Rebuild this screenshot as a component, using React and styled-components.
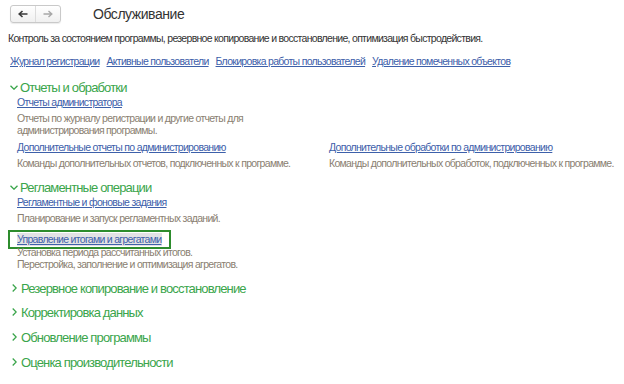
import React from "react";
import styled, { createGlobalStyle } from "styled-components";

const Global = createGlobalStyle`
  html, body { margin: 0; padding: 0; background: #fff; }
  body { font-family: "Liberation Sans", Arial, sans-serif; }
`;

const Page = styled.div`
  width: 624px;
  height: 384px;
  box-sizing: border-box;
  padding: 5px 8px 0 8px;
  display: flex;
  flex-direction: column;
  overflow: hidden;
  color: #333;
`;

const Small = `
  font-family: "Liberation Sans", Arial, sans-serif;
  font-size: 10.5px;
  letter-spacing: -0.7px;
  white-space: nowrap;
`;

const Header = styled.div`
  display: flex;
  align-items: center;
  height: 18px;
  padding-left: 2px;
`;

const NavGroup = styled.div`
  display: flex;
  width: 51px;
  height: 18px;
  box-sizing: border-box;
  border: 1px solid #c9c9c9;
  border-radius: 3px;
  background: linear-gradient(#ffffff, #f0f0f0);
  box-shadow: 0 1px 1px rgba(0,0,0,0.08);
`;

const NavButton = styled.div`
  flex: 1;
  display: flex;
  align-items: center;
  justify-content: center;
  & + & { border-left: 1px solid #dcdcdc; }
`;

const Title = styled.div`
  margin-left: 32px;
  font-size: 14px;
  letter-spacing: -0.45px;
  color: #333;
`;

const Lead = styled.div`
  ${Small}
  margin-top: 9px;
  line-height: 13px;
  color: #333;
`;

const LinkRow = styled.div`
  margin-top: 10px;
  padding-left: 2px;
  display: flex;
  gap: 7px;
`;

const Link = styled.a`
  ${Small}
  line-height: 13px;
  color: #3d60aa;
  text-decoration: underline;
  cursor: pointer;
  align-self: flex-start;
`;

const FocusFrame = styled.div`
  align-self: flex-start;
  margin-left: -9px;
  padding: 1px 7px 1px 7px;
  border: 2px solid #2d8c2d;
  margin-top: 6px;
  margin-bottom: -3px;
  line-height: 13px;
  display: flex;
`;

const SelectedLink = styled(Link)`
  background: #e2e2e4;
  padding-right: 1px;
`;

const SectionHead = styled.div`
  display: flex;
  align-items: center;
  margin-top: ${(p) => p.$mt}px;
  height: 16px;
  font-size: 13px;
  letter-spacing: -0.85px;
  color: #3aa54b;
  padding-left: ${(p) => (p.$open ? 2 : 4)}px;
`;

const Chevron = styled.span`
  display: inline-flex;
  width: ${(p) => (p.$open ? 10 : 9)}px;
`;

const SectionBody = styled.div`
  padding-left: 9px;
  display: flex;
  flex-direction: column;
`;

const Columns = styled.div`
  display: grid;
  grid-template-columns: 312px 1fr;
  margin-top: ${(p) => p.$mt || 0}px;
`;

const Item = styled.div`
  display: flex;
  flex-direction: column;
  margin-top: ${(p) => p.$mt || 0}px;
`;

const Desc = styled.div`
  ${Small}
  margin-top: ${(p) => p.$mt ?? 3}px;
  line-height: 12px;
  color: #8a8071;
`;

const ArrowLeft = ({ color }) => (
  <svg width="10" height="8" viewBox="0 0 10 8">
    <path d="M9.5 4H1.5M4.5 1L1.2 4L4.5 7" fill="none" stroke={color} strokeWidth="1.6" />
  </svg>
);
const ArrowRight = ({ color }) => (
  <svg width="10" height="8" viewBox="0 0 10 8">
    <path d="M0.5 4H8.5M5.5 1L8.8 4L5.5 7" fill="none" stroke={color} strokeWidth="1.4" />
  </svg>
);

const ChevDown = () => (
  <svg width="8" height="5" viewBox="0 0 8 5">
    <path d="M0.5 0.7L4 4.2L7.5 0.7" fill="none" stroke="#3aa54b" strokeWidth="1.3" />
  </svg>
);
const ChevRight = () => (
  <svg width="5" height="8" viewBox="0 0 5 8">
    <path d="M0.7 0.5L4.2 4L0.7 7.5" fill="none" stroke="#3aa54b" strokeWidth="1.3" />
  </svg>
);

const Section = ({ title, open, mt }) => (
  <SectionHead $open={open} $mt={mt}>
    <Chevron $open={open}>{open ? <ChevDown /> : <ChevRight />}</Chevron>
    {title}
  </SectionHead>
);

export default function App() {
  return (
    <>
      <Global />
      <Page>
        <Header>
          <NavGroup>
            <NavButton><ArrowLeft color="#3a3a3a" /></NavButton>
            <NavButton><ArrowRight color="#a8a8a8" /></NavButton>
          </NavGroup>
          <Title>Обслуживание</Title>
        </Header>
        <Lead>Контроль за состоянием программы, резервное копирование и восстановление, оптимизация быстродействия.</Lead>
        <LinkRow>
          <Link>Журнал регистрации</Link>
          <Link>Активные пользователи</Link>
          <Link>Блокировка работы пользователей</Link>
          <Link>Удаление помеченных объектов</Link>
        </LinkRow>

        <Section title="Отчеты и обработки" open mt={11} />
        <SectionBody>
          <Item $mt={1}>
            <Link>Отчеты администратора</Link>
            <Desc>Отчеты по журналу регистрации и другие отчеты для<br />администрирования программы.</Desc>
          </Item>
          <Columns $mt={5}>
            <Item>
              <Link>Дополнительные отчеты по администрированию</Link>
              <Desc>Команды дополнительных отчетов, подключенных к программе.</Desc>
            </Item>
            <Item>
              <Link>Дополнительные обработки по администрированию</Link>
              <Desc>Команды дополнительных обработок, подключенных к программе.</Desc>
            </Item>
          </Columns>
        </SectionBody>

        <Section title="Регламентные операции" open mt={10} />
        <SectionBody>
          <Item $mt={1}>
            <Link>Регламентные и фоновые задания</Link>
            <Desc>Планирование и запуск регламентных заданий.</Desc>
          </Item>
          <Item>
            <FocusFrame>
              <SelectedLink>Управление итогами и агрегатами</SelectedLink>
            </FocusFrame>
            <Desc $mt={0}>Установка периода рассчитанных итогов.<br />Перестройка, заполнение и оптимизация агрегатов.</Desc>
          </Item>
        </SectionBody>

        <Section title="Резервное копирование и восстановление" mt={10} />
        <Section title="Корректировка данных" mt={8} />
        <Section title="Обновление программы" mt={9} />
        <Section title="Оценка производительности" mt={9} />
      </Page>
    </>
  );
}
